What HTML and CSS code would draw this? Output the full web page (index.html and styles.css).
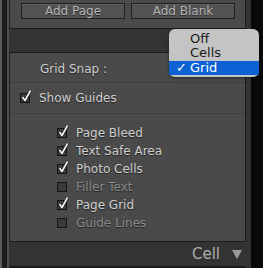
FILE: index.html
```html
<!DOCTYPE html>
<html lang="en">
<head>
  <meta charset="UTF-8" />
  <title>Guides Panel</title>
  <link rel="stylesheet" href="styles.css">
</head>
<body>
  <div class="frame">
    <div class="rail"><span class="r1"></span><span class="r2"></span><span class="r3"></span></div>
    <div class="main">
      <div class="panel top">
        <button class="btn">Add Page</button>
        <button class="btn">Add Blank</button>
      </div>
      <div class="gap"></div>
      <div class="panel guides">
        <div class="row snap">Grid Snap :</div>
        <div class="row show">
          <span class="box on"><svg viewBox="0 0 12 14" width="12" height="14"><path d="M2.5 8 L5 11.5 L10.5 1.5" fill="none" stroke="#111" stroke-width="2.8" stroke-linejoin="round"/><path d="M2.5 8 L5 11.5 L10.5 1.5" fill="none" stroke="#f4f4f4" stroke-width="1.7" stroke-linejoin="round"/></svg></span>
          Show Guides
        </div>
        <div class="list">
          <div class="item"><span class="box on"><svg viewBox="0 0 12 14" width="12" height="14"><path d="M2.5 8 L5 11.5 L10.5 1.5" fill="none" stroke="#111" stroke-width="2.8" stroke-linejoin="round"/><path d="M2.5 8 L5 11.5 L10.5 1.5" fill="none" stroke="#f4f4f4" stroke-width="1.7" stroke-linejoin="round"/></svg></span>Page Bleed</div>
          <div class="item"><span class="box on"><svg viewBox="0 0 12 14" width="12" height="14"><path d="M2.5 8 L5 11.5 L10.5 1.5" fill="none" stroke="#111" stroke-width="2.8" stroke-linejoin="round"/><path d="M2.5 8 L5 11.5 L10.5 1.5" fill="none" stroke="#f4f4f4" stroke-width="1.7" stroke-linejoin="round"/></svg></span>Text Safe Area</div>
          <div class="item"><span class="box on"><svg viewBox="0 0 12 14" width="12" height="14"><path d="M2.5 8 L5 11.5 L10.5 1.5" fill="none" stroke="#111" stroke-width="2.8" stroke-linejoin="round"/><path d="M2.5 8 L5 11.5 L10.5 1.5" fill="none" stroke="#f4f4f4" stroke-width="1.7" stroke-linejoin="round"/></svg></span>Photo Cells</div>
          <div class="item off"><span class="box"></span>Filler Text</div>
          <div class="item"><span class="box on"><svg viewBox="0 0 12 14" width="12" height="14"><path d="M2.5 8 L5 11.5 L10.5 1.5" fill="none" stroke="#111" stroke-width="2.8" stroke-linejoin="round"/><path d="M2.5 8 L5 11.5 L10.5 1.5" fill="none" stroke="#f4f4f4" stroke-width="1.7" stroke-linejoin="round"/></svg></span>Page Grid</div>
          <div class="item off"><span class="box"></span>Guide Lines</div>
        </div>
      </div>
      <div class="header">Cell <span class="tri"></span></div>
      <div class="panel next"></div>
    </div>
    <div class="edge"></div>
  </div>

  <div class="menu">
    <div class="opt">Off</div>
    <div class="opt">Cells</div>
    <div class="opt sel"><span class="tick">✓</span>Grid</div>
  </div>
</body>
</html>
```
FILE: styles.css
```css
* {
  box-sizing: border-box;
}

body {
  margin: 0;
  width: 263px;
  height: 268px;
  overflow: hidden;
  background: #0b0b0b;
  font-family: "DejaVu Sans", "Open Sans", sans-serif;
  position: relative;
}

.frame {
  display: flex;
  height: 268px;
}

.rail {
  display: flex;
  width: 9px;
}

.rail span {
  display: block;
  height: 100%;
}

.r1 { width: 2px; background: #5c5c5c; }
.r2 { width: 5px; background: #1d1d1d; }
.r3 { width: 2px; background: #4e4e4e; }

.main {
  width: 242px;
  background: #333333;
  display: flex;
  flex-direction: column;
}

.edge {
  flex: 1;
  background: #090909;
}

.panel {
  width: 237px;
  background: #4a4a4a;
  border: 1px solid #1b1b1b;
  border-left-color: #222;
}

.top {
  height: 29px;
  border-top: none;
  display: flex;
  gap: 6px;
  padding: 3px 0 0 11px;
}

.btn {
  width: 104px;
  height: 16px;
  padding: 0;
  background: #525252;
  border: 1px solid #1f1f1f;
  box-shadow: inset 0 1px 0 #606060;
  color: #b4b4b4;
  font-family: "DejaVu Sans", sans-serif;
  font-size: 12px;
  line-height: 14px;
  text-shadow: 0 1px 0 #2a2a2a;
}

.gap {
  height: 24px;
}

.guides {
  height: 193px;
  color: #cfcfcf;
  font-size: 12px;
  text-shadow: 0 1px 1px #222;
}

.row {
  height: 31px;
  border-bottom: 1px solid #3e3e3e;
  display: flex;
  align-items: center;
}

.snap {
  padding: 2px 0 0 30px;
  height: 30px;
}

.show {
  padding-left: 10px;
  gap: 9px;
}

.box {
  position: relative;
  display: inline-block;
  width: 10px;
  height: 10px;
  border: 1px solid #131313;
  background: #3a3a3a;
  flex: none;
}

.box svg {
  position: absolute;
  left: -1px;
  top: -5px;
}

.list {
  padding: 10px 0 0 47px;
}

.item {
  height: 18px;
  display: flex;
  align-items: center;
  gap: 9px;
}

.item.off {
  color: #8a8a8a;
}

.header {
  height: 24px;
  display: flex;
  align-items: center;
  justify-content: flex-end;
  padding-right: 9px;
  color: #ababab;
  font-size: 15px;
  gap: 12px;
}

.tri {
  width: 0;
  height: 0;
  border-left: 5px solid transparent;
  border-right: 5px solid transparent;
  border-top: 9px solid #9a9a9a;
}

.next {
  flex: 1;
}

.menu {
  position: absolute;
  left: 169px;
  top: 29px;
  width: 90px;
  height: 48px;
  background: #c4c4c4;
  border-radius: 6px;
  padding-top: 3px;
  box-shadow: 0 1px 3px rgba(0, 0, 0, 0.5);
  font-size: 13px;
  color: #1a1a1a;
}

.opt {
  height: 14px;
  line-height: 14px;
  padding-left: 21px;
  position: relative;
}

.sel {
  margin-top: 1px;
  height: 14px;
  background: #0c62d4;
  color: #fff;
}

.tick {
  position: absolute;
  left: 7px;
}
```
